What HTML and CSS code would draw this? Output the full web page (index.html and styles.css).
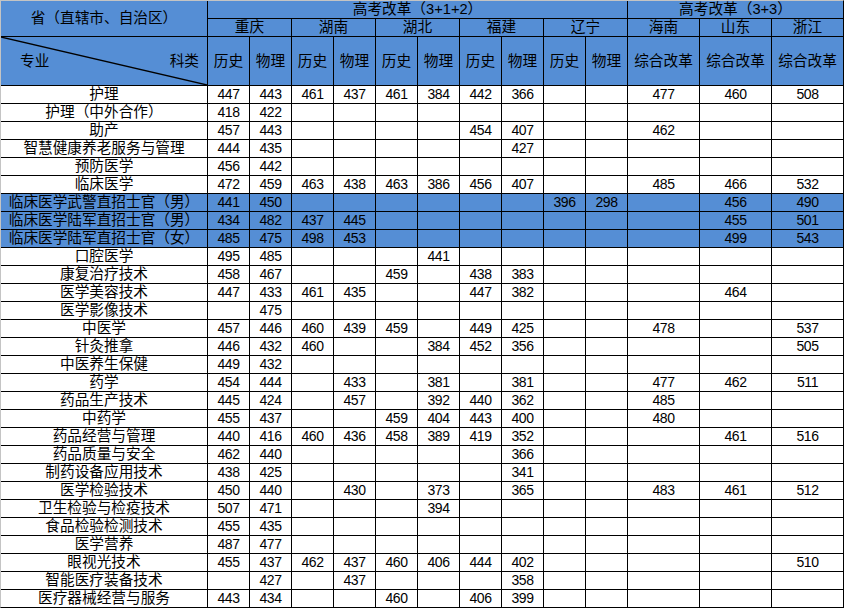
FILE: index.html
```html
<!DOCTYPE html>
<html lang="zh-CN">
<head>
<meta charset="utf-8">
<title>高考改革 分数表</title>
<link rel="stylesheet" href="styles.css">
</head>
<body>
<div class="sheet">
  <div class="hd prov">省（直辖市、自治区）</div>
  <div class="hd span10">高考改革（3+1+2）</div>
  <div class="hd span3">高考改革（3+3）</div>

  <div class="hd span2">重庆</div>
  <div class="hd span2">湖南</div>
  <div class="hd span2">湖北</div>
  <div class="hd span2">福建</div>
  <div class="hd span2">辽宁</div>
  <div class="hd">海南</div>
  <div class="hd">山东</div>
  <div class="hd">浙江</div>

  <div class="hd diag">
    <svg class="slash" viewBox="0 0 206 48" preserveAspectRatio="none" aria-hidden="true"><line x1="0" y1="0" x2="206" y2="48" stroke="#000" stroke-width="1.3"/></svg>
    <span class="lbl">专业</span><span class="lbl">科类</span>
  </div>
  <div class="hd">历史</div><div class="hd">物理</div>
  <div class="hd">历史</div><div class="hd">物理</div>
  <div class="hd">历史</div><div class="hd">物理</div>
  <div class="hd">历史</div><div class="hd">物理</div>
  <div class="hd">历史</div><div class="hd">物理</div>
  <div class="hd">综合改革</div><div class="hd">综合改革</div><div class="hd">综合改革</div>

  <div class="row"><div>护理</div><div>447</div><div>443</div><div>461</div><div>437</div><div>461</div><div>384</div><div>442</div><div>366</div><div></div><div></div><div>477</div><div>460</div><div>508</div></div>
  <div class="row"><div>护理（中外合作）</div><div>418</div><div>422</div><div></div><div></div><div></div><div></div><div></div><div></div><div></div><div></div><div></div><div></div><div></div></div>
  <div class="row"><div>助产</div><div>457</div><div>443</div><div></div><div></div><div></div><div></div><div>454</div><div>407</div><div></div><div></div><div>462</div><div></div><div></div></div>
  <div class="row"><div>智慧健康养老服务与管理</div><div>444</div><div>435</div><div></div><div></div><div></div><div></div><div></div><div>427</div><div></div><div></div><div></div><div></div><div></div></div>
  <div class="row"><div>预防医学</div><div>456</div><div>442</div><div></div><div></div><div></div><div></div><div></div><div></div><div></div><div></div><div></div><div></div><div></div></div>
  <div class="row"><div>临床医学</div><div>472</div><div>459</div><div>463</div><div>438</div><div>463</div><div>386</div><div>456</div><div>407</div><div></div><div></div><div>485</div><div>466</div><div>532</div></div>
  <div class="row hl"><div>临床医学武警直招士官（男）</div><div>441</div><div>450</div><div></div><div></div><div></div><div></div><div></div><div></div><div>396</div><div>298</div><div></div><div>456</div><div>490</div></div>
  <div class="row hl"><div>临床医学陆军直招士官（男）</div><div>434</div><div>482</div><div>437</div><div>445</div><div></div><div></div><div></div><div></div><div></div><div></div><div></div><div>455</div><div>501</div></div>
  <div class="row hl"><div>临床医学陆军直招士官（女）</div><div>485</div><div>475</div><div>498</div><div>453</div><div></div><div></div><div></div><div></div><div></div><div></div><div></div><div>499</div><div>543</div></div>
  <div class="row"><div>口腔医学</div><div>495</div><div>485</div><div></div><div></div><div></div><div>441</div><div></div><div></div><div></div><div></div><div></div><div></div><div></div></div>
  <div class="row"><div>康复治疗技术</div><div>458</div><div>467</div><div></div><div></div><div>459</div><div></div><div>438</div><div>383</div><div></div><div></div><div></div><div></div><div></div></div>
  <div class="row"><div>医学美容技术</div><div>447</div><div>433</div><div>461</div><div>435</div><div></div><div></div><div>447</div><div>382</div><div></div><div></div><div></div><div>464</div><div></div></div>
  <div class="row"><div>医学影像技术</div><div></div><div>475</div><div></div><div></div><div></div><div></div><div></div><div></div><div></div><div></div><div></div><div></div><div></div></div>
  <div class="row"><div>中医学</div><div>457</div><div>446</div><div>460</div><div>439</div><div>459</div><div></div><div>449</div><div>425</div><div></div><div></div><div>478</div><div></div><div>537</div></div>
  <div class="row"><div>针灸推拿</div><div>446</div><div>432</div><div>460</div><div></div><div></div><div>384</div><div>452</div><div>356</div><div></div><div></div><div></div><div></div><div>505</div></div>
  <div class="row"><div>中医养生保健</div><div>449</div><div>432</div><div></div><div></div><div></div><div></div><div></div><div></div><div></div><div></div><div></div><div></div><div></div></div>
  <div class="row"><div>药学</div><div>454</div><div>444</div><div></div><div>433</div><div></div><div>381</div><div></div><div>381</div><div></div><div></div><div>477</div><div>462</div><div>511</div></div>
  <div class="row"><div>药品生产技术</div><div>445</div><div>424</div><div></div><div>457</div><div></div><div>392</div><div>440</div><div>362</div><div></div><div></div><div>485</div><div></div><div></div></div>
  <div class="row"><div>中药学</div><div>455</div><div>437</div><div></div><div></div><div>459</div><div>404</div><div>443</div><div>400</div><div></div><div></div><div>480</div><div></div><div></div></div>
  <div class="row"><div>药品经营与管理</div><div>440</div><div>416</div><div>460</div><div>436</div><div>458</div><div>389</div><div>419</div><div>352</div><div></div><div></div><div></div><div>461</div><div>516</div></div>
  <div class="row"><div>药品质量与安全</div><div>462</div><div>440</div><div></div><div></div><div></div><div></div><div></div><div>366</div><div></div><div></div><div></div><div></div><div></div></div>
  <div class="row"><div>制药设备应用技术</div><div>438</div><div>425</div><div></div><div></div><div></div><div></div><div></div><div>341</div><div></div><div></div><div></div><div></div><div></div></div>
  <div class="row"><div>医学检验技术</div><div>450</div><div>440</div><div></div><div>430</div><div></div><div>373</div><div></div><div>365</div><div></div><div></div><div>483</div><div>461</div><div>512</div></div>
  <div class="row"><div>卫生检验与检疫技术</div><div>507</div><div>471</div><div></div><div></div><div></div><div>394</div><div></div><div></div><div></div><div></div><div></div><div></div><div></div></div>
  <div class="row"><div>食品检验检测技术</div><div>455</div><div>435</div><div></div><div></div><div></div><div></div><div></div><div></div><div></div><div></div><div></div><div></div><div></div></div>
  <div class="row"><div>医学营养</div><div>487</div><div>477</div><div></div><div></div><div></div><div></div><div></div><div></div><div></div><div></div><div></div><div></div><div></div></div>
  <div class="row"><div>眼视光技术</div><div>455</div><div>437</div><div>462</div><div>437</div><div>460</div><div>406</div><div>444</div><div>402</div><div></div><div></div><div></div><div></div><div>510</div></div>
  <div class="row"><div>智能医疗装备技术</div><div></div><div>427</div><div></div><div>437</div><div></div><div></div><div></div><div>358</div><div></div><div></div><div></div><div></div><div></div></div>
  <div class="row"><div>医疗器械经营与服务</div><div>443</div><div>434</div><div></div><div></div><div>460</div><div></div><div>406</div><div>399</div><div></div><div></div><div></div><div></div><div></div></div>
</div>
</body>
</html>
```

FILE: styles.css
```css
html, body {
  margin: 0;
  padding: 0;
  background: #fff;
}

body {
  font-family: "Liberation Sans", "Noto Sans CJK SC", sans-serif;
  font-size: 14.67px;
  color: #000;
}

.sheet {
  display: grid;
  grid-template-columns: 206px repeat(10, 41px) repeat(3, 71px);
  grid-template-rows: 17px 17px 48px repeat(29, 17px);
  gap: 1px;
  width: max-content;
  background: #000;
  border-top: 1px solid #c4c4c4;
  border-left: 1px solid #c4c4c4;
  border-right: 1px solid #000;
  border-bottom: 1px solid #000;
}

.sheet div {
  display: flex;
  align-items: center;
  justify-content: center;
  background: #fff;
  line-height: 17px;
  white-space: nowrap;
}

.sheet .row {
  display: contents;
}

.sheet .row > div + div {
  font-size: 14px;
  letter-spacing: -0.4px;
}

.sheet .hd,
.sheet .hl > div {
  background: #558ed5;
}

.sheet .prov {
  grid-row: span 2;
}

.sheet .span10 {
  grid-column: span 10;
}

.sheet .span3 {
  grid-column: span 3;
}

.sheet .span2 {
  grid-column: span 2;
}

.sheet .diag {
  position: relative;
  justify-content: space-between;
  padding: 0 8px 0 19px;
}

.slash {
  position: absolute;
  left: 0;
  top: 0;
  width: 100%;
  height: 100%;
}

.lbl {
  position: relative;
}
```
